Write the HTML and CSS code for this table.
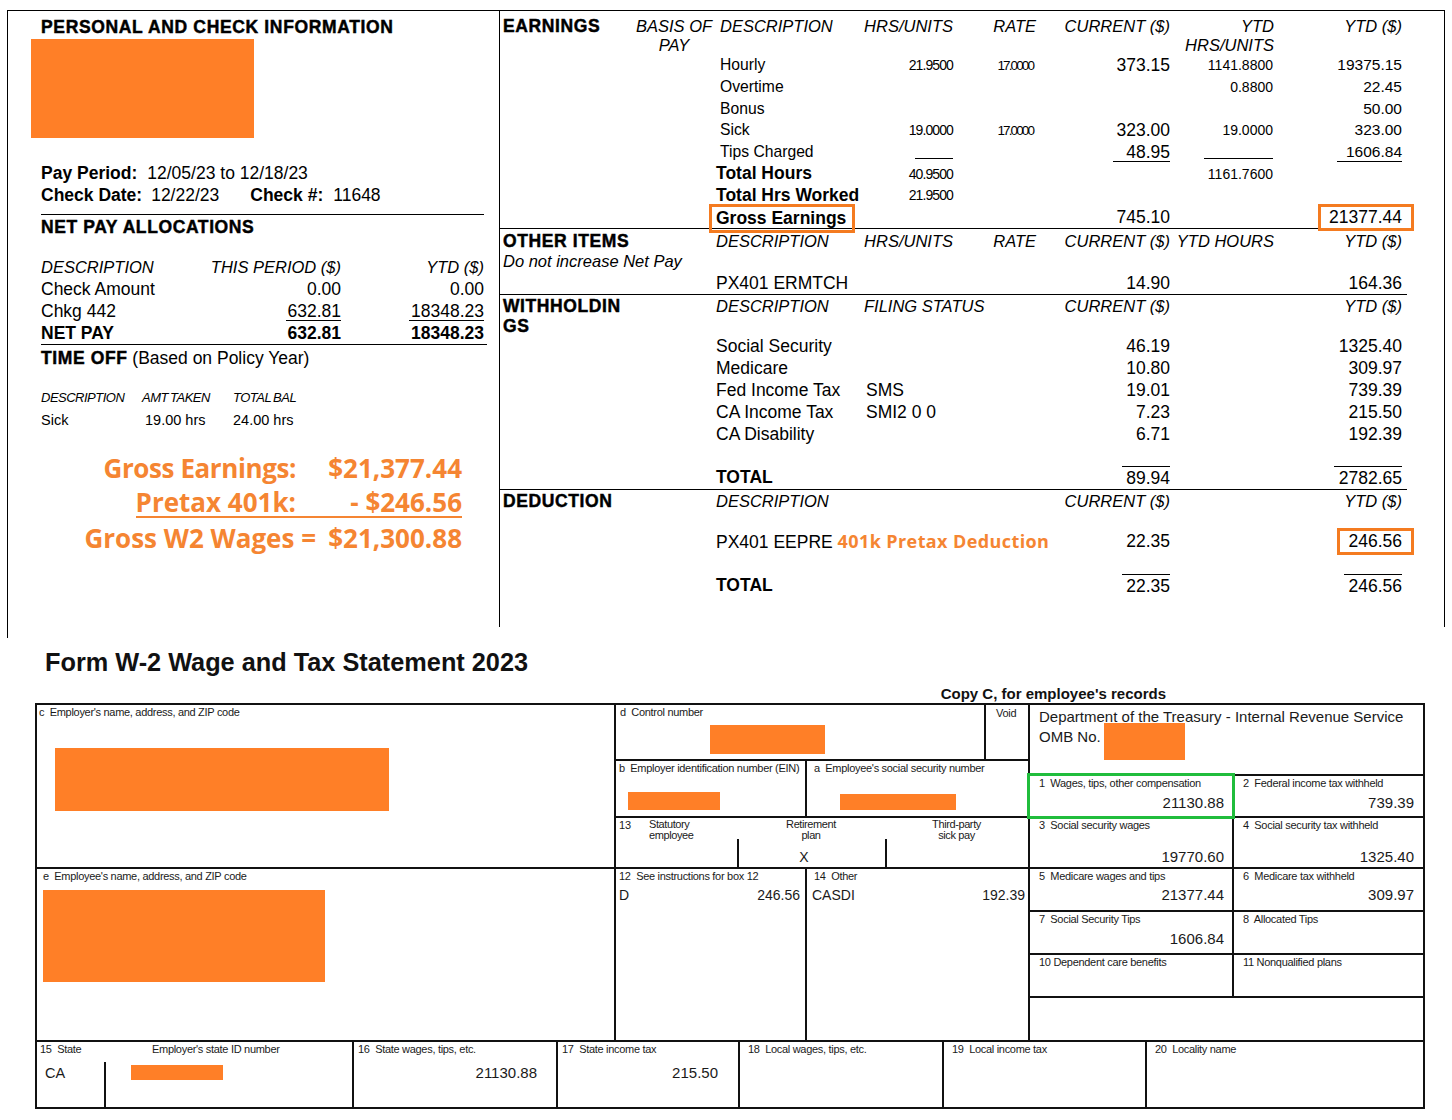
FILE: index.html
```html
<!DOCTYPE html>
<html>
<head>
<meta charset="utf-8">
<title>Pay stub and W-2</title>
<link rel="stylesheet" href="styles.css">
</head>
<body>
<div class="stub">
  <div class="lp">
    <div class="ttl first">PERSONAL AND CHECK INFORMATION</div>
    <div class="redact r-name"></div>
    <div class="pl pp"><b>Pay Period:</b><span class="g10">12/05/23 to 12/18/23</span></div>
    <div class="pl cd"><b>Check Date:</b><span class="g6">12/22/23</span><b class="g31">Check #:</b><span class="g10">11648</span></div>
    <div class="ttl npa">NET PAY ALLOCATIONS</div>
    <div class="npt hd"><span>DESCRIPTION</span><span class="rt">THIS PERIOD ($)</span><span class="rt">YTD ($)</span></div>
    <div class="npt"><span>Check Amount</span><span class="rt">0.00</span><span class="rt">0.00</span></div>
    <div class="npt"><span>Chkg 442</span><span class="rt"><span class="ul pl1">632.81</span></span><span class="rt"><span class="ul pl2">18348.23</span></span></div>
    <div class="npt net"><span>NET PAY</span><span class="rt">632.81</span><span class="rt">18348.23</span></div>
    <div class="to"><span class="ttl">TIME OFF</span> (Based on Policy Year)</div>
    <div class="tot hd2"><span>DESCRIPTION</span><span>AMT TAKEN</span><span>TOTAL BAL</span></div>
    <div class="tot tv"><span>Sick</span><span class="pl3">19.00 hrs</span><span>24.00 hrs</span></div>
    <div class="sum">
      <div class="sr"><span class="sl s1">Gross Earnings:</span><span class="sv">$21,377.44</span></div>
      <div class="sr"><span class="sline"><span class="sl">Pretax 401k:</span><span class="sv">- $246.56</span></span></div>
      <div class="sr"><span class="sl sl3">Gross W2 Wages =</span><span class="sv">$21,300.88</span></div>
    </div>
  </div>

  <div class="rp">
    <div class="sec earn">
      <div class="r ehd">
        <div class="t1"><span class="ttl">EARNINGS</span><span class="basis h">BASIS OF<br>PAY</span></div>
        <div class="h pl4">DESCRIPTION</div>
        <div class="h rt">HRS/UNITS</div>
        <div class="h rt">RATE</div>
        <div class="h rt">CURRENT ($)</div>
        <div class="h tr">YTD<br>HRS/UNITS</div>
        <div class="h rt">YTD ($)</div>
        <div></div>
      </div>
      <div class="r er">
        <div></div><div class="d15">Hourly</div><div class="rt sm">21.9500</div><div class="rt rate">17.0000</div><div class="rt v17">373.15</div><div class="rt v14">1141.8800</div><div class="rt v15">19375.15</div><div></div>
      </div>
      <div class="r er">
        <div></div><div class="d15">Overtime</div><div></div><div></div><div></div><div class="rt v14">0.8800</div><div class="rt v15">22.45</div><div></div>
      </div>
      <div class="r er">
        <div></div><div class="d15">Bonus</div><div></div><div></div><div></div><div></div><div class="rt v15">50.00</div><div></div>
      </div>
      <div class="r er">
        <div></div><div class="d15">Sick</div><div class="rt sm">19.0000</div><div class="rt rate">17.0000</div><div class="rt v17">323.00</div><div class="rt v14">19.0000</div><div class="rt v15">323.00</div><div></div>
      </div>
      <div class="r er">
        <div></div><div class="d15">Tips Charged</div><div class="rt"><span class="ln w38"></span></div><div></div><div class="rt v17"><span class="ul pl13">48.95</span></div><div class="rt"><span class="ln w69"></span></div><div class="rt v15"><span class="ul pl9">1606.84</span></div><div></div>
      </div>
      <div class="r er">
        <div></div><div class="bd">Total Hours</div><div class="rt sm">40.9500</div><div></div><div></div><div class="rt v14">1161.7600</div><div></div><div></div>
      </div>
      <div class="r er">
        <div></div><div class="bd">Total Hrs Worked</div><div class="rt sm">21.9500</div><div></div><div></div><div></div><div></div><div></div>
      </div>
      <div class="r er">
        <div></div><div class="bd"><span class="box-ge">Gross Earnings</span></div><div></div><div></div><div class="rt v17">745.10</div><div></div><div class="rt v17"><span class="box-v">21377.44</span></div><div></div>
      </div>
    </div>

    <div class="sec oth">
      <div class="r h24">
        <div class="t1"><span class="ttl">OTHER ITEMS</span></div>
        <div class="h">DESCRIPTION</div>
        <div class="h rt">HRS/UNITS</div>
        <div class="h rt">RATE</div>
        <div class="h rt">CURRENT ($)</div>
        <div class="h rt">YTD HOURS</div>
        <div class="h rt">YTD ($)</div>
        <div></div>
      </div>
      <div class="r h16">
        <div class="t1 h">Do not increase Net Pay</div><div></div><div></div><div></div><div></div><div></div><div></div><div></div>
      </div>
      <div class="r h25">
        <div></div><div class="v17 pt3">PX401 ERMTCH</div><div></div><div></div><div class="rt v17 pt3">14.90</div><div></div><div class="rt v17 pt3">164.36</div><div></div>
      </div>
    </div>

    <div class="sec wh">
      <div class="r h23">
        <div class="t1"><span class="ttl">WITHHOLDIN</span></div>
        <div class="h">DESCRIPTION</div>
        <div class="h">FILING STATUS</div>
        <div></div>
        <div class="h rt">CURRENT ($)</div>
        <div></div>
        <div class="h rt">YTD ($)</div>
        <div></div>
      </div>
      <div class="r h17">
        <div class="t1"><span class="ttl">GS</span></div><div></div><div></div><div></div><div></div><div></div><div></div><div></div>
      </div>
      <div class="r h22 v17">
        <div></div><div>Social Security</div><div></div><div></div><div class="rt">46.19</div><div></div><div class="rt">1325.40</div><div></div>
      </div>
      <div class="r h22 v17">
        <div></div><div>Medicare</div><div></div><div></div><div class="rt">10.80</div><div></div><div class="rt">309.97</div><div></div>
      </div>
      <div class="r h22 v17">
        <div></div><div>Fed Income Tax</div><div class="pl2">SMS</div><div></div><div class="rt">19.01</div><div></div><div class="rt">739.39</div><div></div>
      </div>
      <div class="r h22 v17">
        <div></div><div>CA Income Tax</div><div class="pl2">SMI2 0 0</div><div></div><div class="rt">7.23</div><div></div><div class="rt">215.50</div><div></div>
      </div>
      <div class="r h22 v17">
        <div></div><div>CA Disability</div><div></div><div></div><div class="rt">6.71</div><div></div><div class="rt">192.39</div><div></div>
      </div>
      <div class="r h20"></div>
      <div class="r h24 v17">
        <div></div><div class="bd">TOTAL</div><div></div><div></div><div class="rt"><span class="ol pl4">89.94</span></div><div></div><div class="rt"><span class="ol pl5">2782.65</span></div><div></div>
      </div>
    </div>

    <div class="sec ded">
      <div class="r h22">
        <div class="t1"><span class="ttl">DEDUCTION</span></div>
        <div class="h">DESCRIPTION</div>
        <div></div>
        <div></div>
        <div class="h rt">CURRENT ($)</div>
        <div></div>
        <div class="h rt">YTD ($)</div>
        <div></div>
      </div>
      <div class="r h17"></div>
      <div class="r h24 v17">
        <div></div><div class="span3">PX401 EEPRE <span class="orb">401k Pretax Deduction</span></div><div class="rt">22.35</div><div></div><div class="rt"><span class="box-v">246.56</span></div><div></div>
      </div>
      <div class="r h20"></div>
      <div class="r h24 v17">
        <div></div><div class="bd">TOTAL</div><div></div><div></div><div class="rt"><span class="ol pl4">22.35</span></div><div></div><div class="rt"><span class="ol pl4">246.56</span></div><div></div>
      </div>
    </div>
  </div>
</div>

<div class="w2title">Form W-2 Wage and Tax Statement 2023</div>
<div class="copyc">Copy C, for employee's records</div>

<div class="w2">
  <div class="w2top">
    <div class="col">
      <div class="cell c-c"><div class="lb pl2">c&nbsp; Employer's name, address, and ZIP code</div><div class="redact r-emp"></div></div>
      <div class="cell c-e"><div class="lb pl6 pt2">e&nbsp; Employee's name, address, and ZIP code</div><div class="redact r-ee"></div></div>
    </div>
    <div class="col">
      <div class="pair p-d">
        <div class="cell"><div class="lb pl4">d&nbsp; Control number</div><div class="redact r-ctl"></div></div>
        <div class="cell"><div class="lb void">Void</div></div>
      </div>
      <div class="pair p-ba">
        <div class="cell"><div class="lb pl3 pt2">b&nbsp; Employer identification number (EIN)</div><div class="redact r-ein"></div></div>
        <div class="cell"><div class="lb pl7 pt2">a&nbsp; Employee's social security number</div><div class="redact r-ssn"></div></div>
      </div>
      <div class="cell c13">
        <div class="b13a"><span class="n13">13</span><span class="sub">Statutory<br>employee</span></div>
        <div class="b13b sub">Retirement<br>plan</div>
        <div class="b13c sub">Third-party<br>sick pay</div>
        <div></div>
        <div class="vl x13">X</div>
        <div class="vl"></div>
      </div>
      <div class="pair p-12">
        <div class="cell"><div class="lb pl3 pt2">12&nbsp; See instructions for box 12</div><div class="vrow pl3 pr5"><span>D</span><span>246.56</span></div></div>
        <div class="cell"><div class="lb pl7 pt2">14&nbsp; Other</div><div class="vrow pl5 pr3"><span>CASDI</span><span>192.39</span></div></div>
      </div>
    </div>
    <div class="col">
      <div class="cell dept">
        <div class="dl">Department of the Treasury - Internal Revenue Service</div>
        <div class="dl omb">OMB No. <span class="redact r-omb"></span></div>
      </div>
      <div class="pair p-r r12">
        <div class="cell hl"><div class="lb">1&nbsp; Wages, tips, other compensation</div><div class="wv mt5 pr8">21130.88</div></div>
        <div class="cell"><div class="lb">2&nbsp; Federal income tax withheld</div><div class="wv mt5 pr9">739.39</div></div>
      </div>
      <div class="pair p-r r34">
        <div class="cell"><div class="lb">3&nbsp; Social security wages</div><div class="wv mt17 pr8">19770.60</div></div>
        <div class="cell"><div class="lb">4&nbsp; Social security tax withheld</div><div class="wv mt17 pr9">1325.40</div></div>
      </div>
      <div class="pair p-r r56">
        <div class="cell"><div class="lb pt2">5&nbsp; Medicare wages and tips</div><div class="wv mt4 pr8">21377.44</div></div>
        <div class="cell"><div class="lb pt2">6&nbsp; Medicare tax withheld</div><div class="wv mt4 pr9">309.97</div></div>
      </div>
      <div class="pair p-r r78">
        <div class="cell"><div class="lb pt2">7&nbsp; Social Security Tips</div><div class="wv mt5 pr8">1606.84</div></div>
        <div class="cell"><div class="lb pt2">8&nbsp; Allocated Tips</div></div>
      </div>
      <div class="pair p-r r1011">
        <div class="cell"><div class="lb pt2">10 Dependent care benefits</div></div>
        <div class="cell"><div class="lb pt2">11 Nonqualified plans</div></div>
      </div>
      <div class="cell empty"></div>
    </div>
  </div>
  <div class="w2bot">
    <div class="cell c15">
      <div class="lb pl3">15&nbsp; State</div>
      <div class="lb sid">Employer's state ID number</div>
      <div class="ca">CA</div>
      <div class="sidv"><div class="redact r-sid"></div></div>
    </div>
    <div class="cell"><div class="lb pl4">16&nbsp; State wages, tips, etc.</div><div class="wv mt9 pr19">21130.88</div></div>
    <div class="cell"><div class="lb pl4">17&nbsp; State income tax</div><div class="wv mt9 pr20">215.50</div></div>
    <div class="cell"><div class="lb pl8">18&nbsp; Local wages, tips, etc.</div></div>
    <div class="cell"><div class="lb pl8">19&nbsp; Local income tax</div></div>
    <div class="cell"><div class="lb pl8">20&nbsp; Locality name</div></div>
  </div>
</div>
</body>
</html>
```

FILE: styles.css
```css
* { box-sizing: border-box; margin: 0; padding: 0; }

body {
  margin: 0;
  width: 1452px;
  background: #fff;
  color: #000;
  font-family: "Liberation Sans", Arial, sans-serif;
}

/* ---------- pay stub ---------- */
.stub {
  display: flex;
  margin: 10px 0 0 7px;
  width: 1438px;
  border-top: 1px solid #000;
}

.lp {
  width: 492px;
  height: 627px;
  border-left: 1px solid #000;
  padding: 0 15px 0 33px;
}

.rp {
  width: 946px;
  height: 616px;
  border-left: 1px solid #000;
  border-right: 1px solid #000;
}

.ttl {
  font-weight: 700;
  font-size: 17.5px;
  letter-spacing: 0.6px;
  -webkit-text-stroke: 0.45px #000;
  white-space: nowrap;
}

.ttl.first { line-height: 20px; margin-top: 6px; letter-spacing: 0.65px; }

.redact { background: #ff7f27; }

.r-name { width: 223px; height: 99px; margin: 2px 0 0 -10px; }

.pl { font-size: 17.5px; line-height: 22px; white-space: nowrap; }
.pp { margin-top: 24px; }
.cd { padding-bottom: 8px; border-bottom: 1px solid #000; }
.g10 { margin-left: 10px; }
.g6 { margin-left: 9px; }
.g31 { margin-left: 31px; }

.npa { line-height: 20px; margin-top: 2px; }

.npt {
  display: grid;
  grid-template-columns: 160px 140px 143px;
  align-items: center;
  height: 22px;
  font-size: 17.5px;
  white-space: nowrap;
}
.npt.hd { margin-top: 19px; font-style: italic; font-size: 16.5px; }
.npt.net { font-weight: 700; height: 23px; border-bottom: 1px solid #000; margin-right: -3px; padding-right: 3px; }

.rt { display: flex; justify-content: flex-end; white-space: nowrap; }
.tr { text-align: right; }

.ul { border-bottom: 1px solid #000; line-height: 18px; align-self: center; }
.ol { border-top: 1px solid #000; line-height: 22px; align-self: center; }
.ln { display: block; height: 14px; border-bottom: 1px solid #000; align-self: center; }
.w38 { width: 38px; }
.w69 { width: 69px; margin-right: 1px; }

.pl1 { padding-left: 1px; }
.pl2 { padding-left: 2px; }
.pl3 { padding-left: 3px; }
.pl4 { padding-left: 4px; }
.pl5 { padding-left: 5px; }
.pl6 { padding-left: 6px; }
.pl7 { padding-left: 7px; }
.pl8 { padding-left: 8px; }
.pl9 { padding-left: 9px; }
.pl13 { padding-left: 13px; }
.pt2 { padding-top: 2px; }
.pt3 { padding-top: 3px; }

.to { font-size: 17.5px; line-height: 22px; margin-top: 2px; white-space: nowrap; }

.tot {
  display: grid;
  grid-template-columns: 101px 91px auto;
  line-height: 20px;
  white-space: nowrap;
}
.tot.hd2 {
  margin-top: 19px;
  font-style: italic;
  font-size: 13px;
  letter-spacing: -0.5px;
  word-spacing: -1px;
}
.tot.tv { margin-top: 2px; font-size: 14.5px; }

.sum {
  margin-top: 20.5px;
  padding-right: 22px;
  font-family: "Open Sans", sans-serif;
  font-weight: 700;
  font-size: 26px;
  color: #f58532;
}
.sr {
  display: flex;
  justify-content: flex-end;
  align-items: center;
  height: 35px;
  white-space: nowrap;
}
.sline {
  display: inline-flex;
  line-height: 28px;
  border-bottom: 2px solid #f58532;
}
.sl { margin-right: 30px; }
.s1 { letter-spacing: -0.4px; }
.sl3 { margin-right: 10px; }
.sv { width: 136px; text-align: right; }

/* right panel */
.sec { width: 907px; }
.earn { padding-top: 5.5px; border-bottom: 1px solid #000; }
.oth, .wh { border-bottom: 1px solid #000; }

.r {
  display: grid;
  grid-template-columns: 216px 148px 89px 83px 134px 104px 128px 5px;
  grid-template-rows: 100%;
  align-items: center;
  white-space: nowrap;
}

.ehd { height: 38px; align-items: start; line-height: 19px; }
.er { height: 21.7px; }
.h16 { height: 16px; }
.h17 { height: 17px; }
.h18 { height: 18px; }
.h20 { height: 20px; }
.h22 { height: 22px; }
.h23 { height: 23px; }
.h24 { height: 24px; }
.h25 { height: 25px; }

.t1 { display: flex; padding-left: 3px; }
.basis { width: 80px; margin-left: auto; margin-right: 2px; text-align: center; }

.h { font-style: italic; font-size: 16.5px; }

.d15 { font-size: 15.7px; padding-left: 4px; }
.bd { font-weight: 700; font-size: 17.5px; }
.v17 { font-size: 17.5px; }
.v15 { font-size: 15.5px; }
.v14 { font-size: 14px; padding-right: 1px; }
.sm { font-size: 14px; letter-spacing: -0.9px; }
.rate { font-size: 13.5px; letter-spacing: -1.9px; padding-right: 3px; }

.span3 { grid-column: 2 / 5; }
.orb {
  font-family: "Open Sans", sans-serif;
  font-weight: 700;
  font-size: 18px;
  letter-spacing: 0.4px;
  color: #f58532;
}

.box-ge {
  display: inline-block;
  border: 3px solid #f47b20;
  padding: 0 6px 0 4px;
  margin-left: -7px;
  margin-top: 2px;
  line-height: 23px;
}
.box-v {
  display: block;
  border: 3px solid #f47b20;
  padding: 0 9px 0 8px;
  margin-right: -12px;
  line-height: 21px;
}

/* ---------- W-2 ---------- */
.w2title {
  margin: 9px 0 0 45px;
  font-weight: 700;
  font-size: 25.3px;
  line-height: 30px;
  color: #111;
}
.copyc {
  width: 1166px;
  margin-top: 8px;
  text-align: right;
  font-weight: 700;
  font-size: 15px;
  line-height: 18px;
  color: #111;
}

.w2 {
  margin-left: 35px;
  width: 1390px;
  background: #111;
  padding: 2px;
  display: flex;
  flex-direction: column;
  gap: 2px;
  color: #1a1a1a;
}
.w2top {
  display: grid;
  grid-template-columns: 577px 412px 393px;
  gap: 2px;
  height: 335px;
}
.col { display: flex; flex-direction: column; gap: 2px; }
.cell { background: #fff; }
.pair { display: grid; gap: 2px; }

.lb {
  font-size: 11px;
  letter-spacing: -0.3px;
  line-height: 12px;
  padding-top: 1px;
  white-space: nowrap;
}
.wv { font-size: 15px; line-height: 18px; text-align: right; }
.mt4 { margin-top: 4px; }
.mt5 { margin-top: 5px; }
.mt9 { margin-top: 9px; }
.mt17 { margin-top: 17px; }
.pr3 { padding-right: 3px; }
.pr5 { padding-right: 5px; }
.pr8 { padding-right: 8px; }
.pr9 { padding-right: 9px; }
.pr19 { padding-right: 19px; }
.pr20 { padding-right: 20px; }

.c-c { height: 162px; }
.c-e { flex: 1; }
.r-emp { width: 334px; height: 63px; margin: 30px 0 0 18px; }
.r-ee { width: 282px; height: 92px; margin: 8px 0 0 6px; }

.p-d { grid-template-columns: 368px 42px; height: 54px; }
.p-ba { grid-template-columns: 189px 221px; height: 55px; }
.p-12 { grid-template-columns: 189px 221px; flex: 1; }
.void { padding-left: 10px; padding-top: 2px; }
.r-ctl { width: 115px; height: 29px; margin: 7px 0 0 94px; }
.r-ein { width: 92px; height: 18px; margin: 18px 0 0 12px; }
.r-ssn { width: 116px; height: 16px; margin: 20px 0 0 33px; }

.c13 {
  height: 49px;
  display: grid;
  grid-template-columns: 121px 148px 143px;
  grid-template-rows: 21px 28px;
}
.sub {
  font-size: 11px;
  letter-spacing: -0.4px;
  line-height: 10.5px;
  padding-top: 1px;
  white-space: nowrap;
}
.b13a { display: flex; }
.n13 { width: 33px; padding-left: 3px; font-size: 11px; line-height: 12px; padding-top: 1px; }
.b13b, .b13c { text-align: center; }
.vl { border-left: 2px solid #111; }
.x13 { font-size: 14px; line-height: 18px; padding: 9px 16px 0 0; text-align: center; }

.vrow {
  display: flex;
  justify-content: space-between;
  font-size: 14px;
  line-height: 18px;
  margin-top: 4px;
}

.dept { height: 69px; padding: 2px 0 0 9px; }
.dl { font-size: 15px; line-height: 20px; white-space: nowrap; }
.omb { display: flex; align-items: flex-start; }
.r-omb { display: block; width: 81px; height: 37px; margin: -4px 0 0 3px; }

.p-r { grid-template-columns: 202px 189px; }
.p-r .lb { padding-left: 9px; }
.r12 { height: 40px; }
.r34 { height: 49px; }
.r56, .r78, .r1011 { height: 41px; }
.empty { flex: 1; }
.hl { position: relative; z-index: 2; outline: 3px solid #20bd3c; }

.w2bot {
  display: grid;
  grid-template-columns: 315px 202px 180px 202px 201px 276px;
  gap: 2px;
  height: 65px;
}
.c15 {
  display: grid;
  grid-template-columns: 67px 248px;
  grid-template-rows: 20px 45px;
}
.sid { padding-left: 48px; }
.ca { font-size: 14.5px; line-height: 22px; padding-left: 8px; }
.sidv { border-left: 2px solid #111; }
.r-sid { width: 92px; height: 15px; margin: 3px 0 0 25px; }
```
